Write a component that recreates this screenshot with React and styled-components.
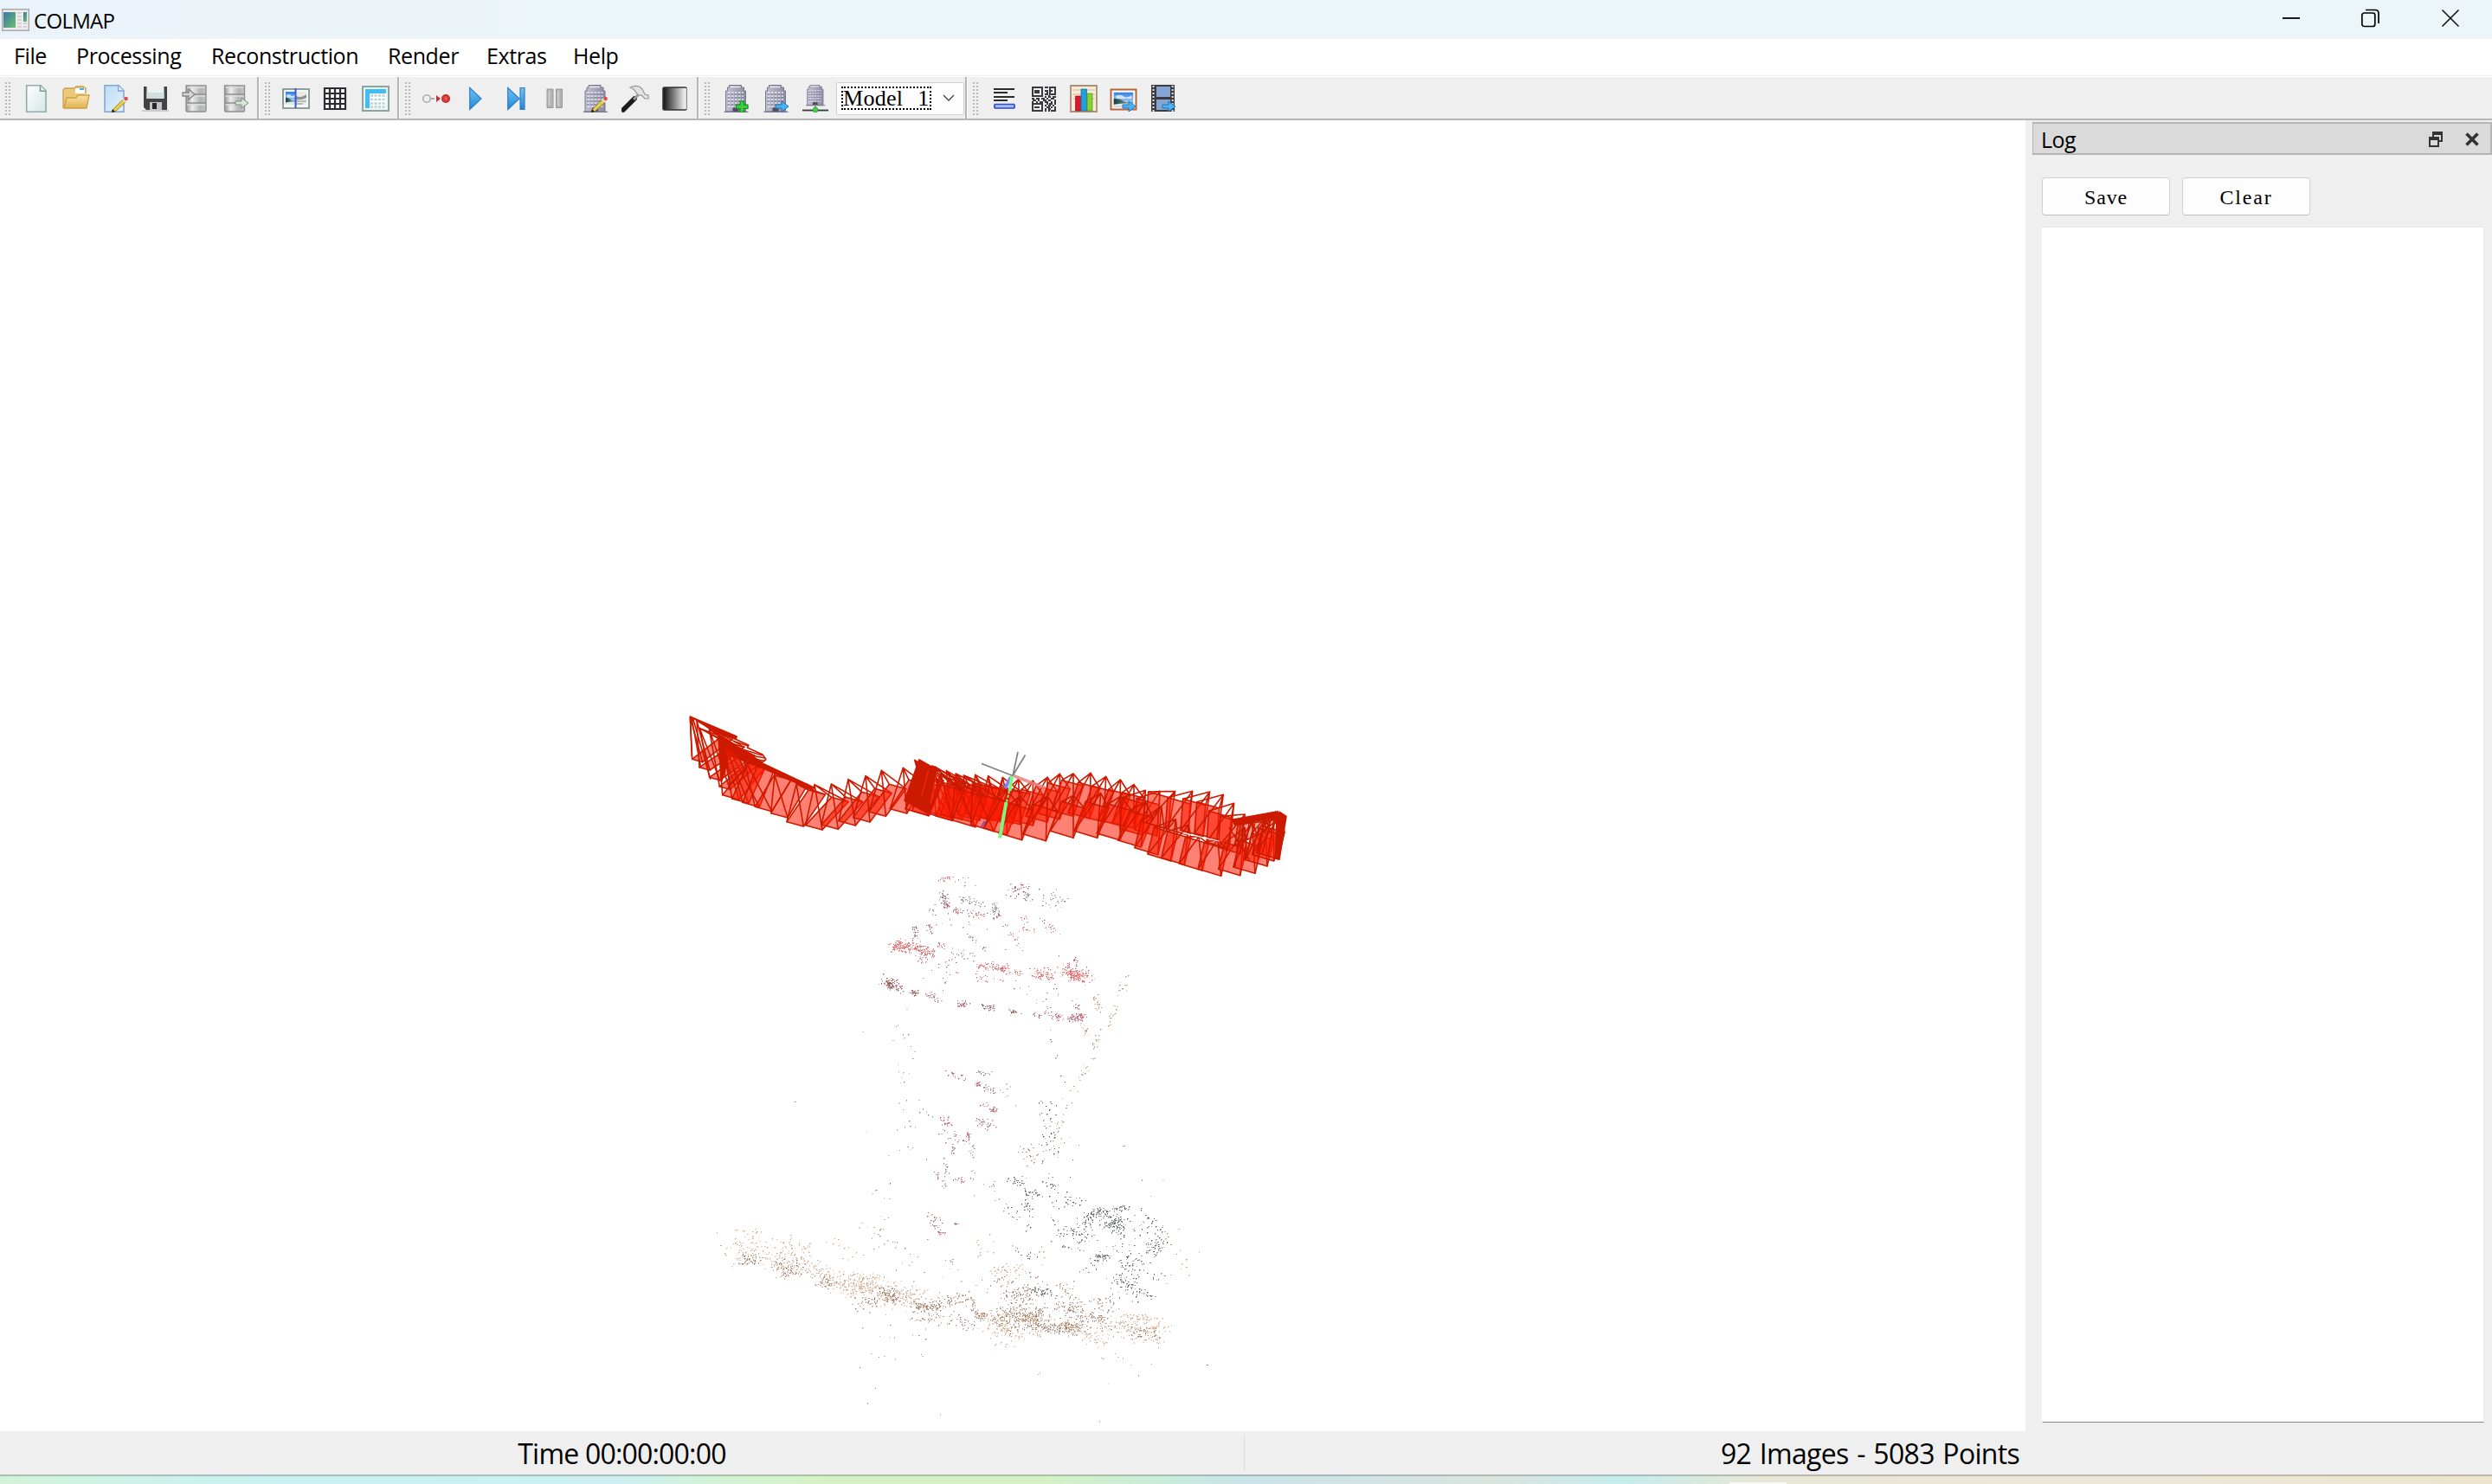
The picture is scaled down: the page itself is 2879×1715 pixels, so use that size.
import React from "react";
import styled, { createGlobalStyle } from "styled-components";

const UI = `"Open Sans", "Noto Sans", sans-serif`;
const MONO = `"Liberation Serif", "Noto Sans CJK SC", serif`;

const Global = createGlobalStyle`
  * { box-sizing: border-box; }
  body { margin: 0; background: #efefef; font-family: ${UI}; color: #000; overflow: hidden; }
  svg { display: block; flex: none; }
`;

const Window = styled.div`
  width: 2879px; height: 1715px; display: flex; flex-direction: column; background: #efefef;
`;
const TitleBar = styled.header`
  height: 45px; flex: none; display: flex; align-items: center; justify-content: space-between;
  padding: 0 36px 0 2px; background: linear-gradient(90deg, #ebf3fa, #ecf5f8 30%);
`;
const Brand = styled.div`
  display: flex; align-items: center; gap: 5px; height: 43px;
`;
const Label = styled.span`
  white-space: pre; display: block;
  font-family: ${(p) => p.$font || UI};
  font-size: ${(p) => p.$size}px;
  line-height: ${(p) => p.$line || 40}px;
  letter-spacing: ${(p) => p.$track || 0}px;
  word-spacing: ${(p) => p.$word || 0}px;
  margin-top: ${(p) => p.$drop || 0}px;
`;
const WindowControls = styled.div`
  display: flex; gap: 68px; margin-top: -3px;
`;
const MenuBar = styled.nav`
  height: 44px; flex: none; display: flex; padding-left: 16px; background: #fff;
  border-bottom: 1px solid #fff; box-shadow: inset 0 -1px 0 #efefef;
`;
const MenuItem = styled.div`
  width: ${(p) => p.$w}px; height: 42px; flex: none;
`;
const ToolBars = styled.div`
  height: 50px; flex: none; display: flex; border-bottom: 2px solid #b5b5b5;
`;
const ToolGroup = styled.div`
  width: ${(p) => (p.$w ? p.$w + "px" : "auto")};
  flex: ${(p) => (p.$w ? "none" : "1")};
  display: flex; align-items: center; gap: 14px; padding: 1px 0 0 6px;
  border-left: ${(p) => (p.$first ? 0 : 1)}px solid #fff;
  border-right: ${(p) => (p.$w ? 2 : 0)}px solid #b5b5b5;
`;
const Handle = styled.div`
  width: 6px; height: 38px; flex: none;
  background-image: radial-gradient(circle at 1px 1px, #b9b9b9 1px, transparent 1.3px);
  background-size: 4px 4px;
`;
const Tool = styled.div`
  width: 32px; height: 32px; flex: none;
`;
const ModelSelect = styled.div`
  width: 148px; height: 38px; margin-left: -6px; flex: none; display: flex; align-items: center; justify-content: space-between;
  padding: 0 10px 0 5px; background: #fdfdfd; border: 1px solid #d0d0d0; border-radius: 2px;
`;
const Focused = styled.div`
  width: 104px; height: 27px; border: 2px dotted #000; display: flex; align-items: center;
`;
const Main = styled.main`
  height: 1515px; flex: none; display: flex;
`;
const Viewport = styled.section`
  width: 2340px; flex: none; background: #fff;
`;
const Dock = styled.aside`
  flex: 1; padding: 2px 0 0 8px; display: flex; flex-direction: column;
`;
const DockTitle = styled.div`
  height: 38px; display: flex; align-items: center; justify-content: space-between; padding: 0 13px 0 9px;
  background: #dadada; border: 2px solid #b5b5b5; border-left-width: 1px;
`;
const DockActions = styled.div`
  display: flex; gap: 26px; align-items: center; padding-top: 2px;
`;
const ButtonRow = styled.div`
  display: flex; gap: 14px; padding: 26px 0 13px 11px;
`;
const Button = styled.button`
  width: 148px; height: 44px; padding: 0; display: flex; align-items: center; justify-content: center;
  background: #fdfdfd; border: 1px solid #d0d0d0; border-bottom-color: #bdbdbd; border-radius: 4px; color: #000;
`;
const LogText = styled.div`
  width: 511px; height: 1382px; margin-left: 11px; background: #fff;
  border: 1px solid #e8e8e8; border-left-color: #fff; border-bottom-color: #868686; border-radius: 2px 2px 0 0;
`;
const StatusBar = styled.footer`
  height: 50px; flex: none; display: flex; padding: 4px 0;
`;
const StatusCell = styled.div`
  flex: 1; height: 42px; display: flex; justify-content: center; align-items: center;
  & + & { border-left: 1px solid #dcdcdc; padding-left: 4px; }
`;
const Desktop = styled.div`
  height: 11px; flex: none; display: flex; align-items: flex-end; padding-left: 1998px;
  background: linear-gradient(rgba(80,80,80,.3) 2px, transparent 2px),
    linear-gradient(90deg, #d2f2d8 0, #cff2e6 4%, #caf0f2 12%, #cdeff1 25%, #d2f2d4 29%, #d4f1c6 33%, #d4f1c6 42%,
    #c8ebdc 47%, #c9e3e8 50%, #d9e4de 60%, #c6ecec 65%, #e8e6d4 71%, #ece8d8 86%, #ece4cc 100%);
`;
const TaskTab = styled.div`
  width: 66px; height: 2px; background: #f8f9f5;
`;
const HiddenDefs = styled.svg`
  position: absolute; width: 0; height: 0;
`;

/* ---------- toolbar icons ---------- */
const Defs = () => (
  <HiddenDefs>
    <defs>
      <linearGradient id="paper" x2="1" y2="1"><stop stopColor="#fff" /><stop offset="1" stopColor="#d3e6e6" /></linearGradient>
      <linearGradient id="blueSheet" x2="1" y2="1"><stop stopColor="#bcdcf5" /><stop offset="1" stopColor="#e4f0fa" /></linearGradient>
      <linearGradient id="folder" x2="0" y2="1"><stop stopColor="#fbe29c" /><stop offset="1" stopColor="#e0b258" /></linearGradient>
      <linearGradient id="steel" x2="1"><stop stopColor="#969696" /><stop offset=".3" stopColor="#eeeef0" /><stop offset=".7" stopColor="#b4b4bc" /><stop offset="1" stopColor="#b8c8ba" /></linearGradient>
      <linearGradient id="sky" x2="0" y2="1"><stop stopColor="#76c3f4" /><stop offset="1" stopColor="#1f86d6" /></linearGradient>
      <linearGradient id="ramp"><stop stopColor="#111" /><stop offset="1" stopColor="#fff" /></linearGradient>
      <linearGradient id="tower"><stop stopColor="#c2c2d2" /><stop offset="1" stopColor="#8d8da3" /></linearGradient>
      <linearGradient id="photoSky" x2="0" y2="1"><stop stopColor="#2f7de4" /><stop offset="1" stopColor="#dff0fb" /></linearGradient>
      <linearGradient id="photoLand" x2="1" y2="0"><stop stopColor="#173d3a" /><stop offset="1" stopColor="#8fbab0" /></linearGradient>
      <linearGradient id="app" x2="1" y2="1"><stop stopColor="#3b74a8" /><stop offset="1" stopColor="#6cc06a" /></linearGradient>
      <radialGradient id="ball"><stop stopColor="#f06060" /><stop offset="1" stopColor="#c02020" /></radialGradient>
    </defs>
  </HiddenDefs>
);
const Svg = ({ children }) => <svg width="32" height="32" viewBox="0 0 32 32">{children}</svg>;

const Pencil = () => (
  <g>
    <path d="M12 29L24 17l3 3L15 31l-4 1z" fill="#e9cf45" stroke="#8b7420" strokeWidth=".8" />
    <path d="M11 32l1-4 3 3z" fill="#222" />
    <path d="M23 17l2-2 4 4-2 2z" fill="#ddd" /><circle cx="27.6" cy="16" r="2.3" fill="#e04a50" />
  </g>
);
const Arrow = ({ x = 14, y = 19, c = "#4db2f2", s = "#2273b5" }) => (
  <path transform={`translate(${x} ${y})`} d="M0 4h7V0l8 6-8 6V8H0z" fill={c} stroke={s} strokeWidth="1" />
);
const Building = () => (
  <g>
    <path d="M6 .5h14V3h3v4h2v24H2V7h2V3h2z" fill="url(#tower)" stroke="#77778f" strokeWidth="1" />
    <path d="M7 2.500h12" stroke="#e4e4ee" strokeWidth="1.500" />
    <path d="M4.500 9h18M4.500 13h18M4.500 17h18M4.500 21h18M4.500 25h18" stroke="#e6e6f0" strokeWidth="1.300" strokeDasharray="2.600 1.400" />
    <path d="M4 11h19M4 15h19M4 19h19M4 23h19" stroke="#73738c" strokeWidth=".9" strokeDasharray="2.500 1.500" />
    <path d="M10 26.500h7v4.500h-7z" fill="#4f4a5c" /><path d="M0 31.300h28" stroke="#77778f" strokeWidth="1.300" />
  </g>
);
const Cylinders = () => (
  <g fill="url(#steel)" stroke="#8e8e8e" strokeWidth="1.300">
    <path d="M5 .8h23v9l-1 1H6l-1-1zM5 11h23v9l-1 1H6l-1-1zM5 21h23v9l-1 1H6l-1-1z" />
    <path d="M6 3h21M6 13h21M6 23h21" stroke="#ddd" />
  </g>
);
const Photo = ({ x, y, w, h }) => (
  <svg x={x} y={y} width={w} height={h} viewBox="0 0 24 18" preserveAspectRatio="none">
    <path d="M0 0h24v18H0z" fill="url(#photoSky)" />
    <path d="M2 5q6-3 10 0t10-1v4H4z" fill="#fff" opacity=".7" />
    <path d="M0 8q8 0 12 3t12 0v7H0z" fill="url(#photoLand)" />
    <path d="M0 15q12-2 24-1v4H0z" fill="#dcebe9" />
  </svg>
);

const NewIcon = () => <Svg><path d="M4.700.7H21l6 6v24.600H4.700z" fill="url(#paper)" stroke="#93abab" strokeWidth="1.600" /><path d="M20.500.8V7.200H27" fill="#e6efef" stroke="#7f9898" strokeWidth="1.500" /></Svg>;
const OpenIcon = () => <Svg><path d="M1 27V6l2-2h11l2-2h8l3 2v6" fill="#edc97c" stroke="#cda047" strokeWidth="1.300" /><path d="M15 4h11v6H15z" fill="#fff" /><path d="M20 4h5v2h-5z" fill="#39b4f0" /><path d="M2 27L5 15h11l2-3h13l-3 15z" fill="url(#folder)" stroke="#cda047" strokeWidth="1.300" /></Svg>;
const EditIcon = () => <Svg><g transform="translate(-1 0)"><path d="M4 .7h16l6 6v24.600H4z" fill="url(#blueSheet)" stroke="#7fa3d2" strokeWidth="1.500" /><path d="M19.500 1v6H26" fill="#e3eefb" stroke="#7fa3d2" strokeWidth="1.300" /></g><Pencil /></Svg>;
const SaveIcon = () => <Svg><path d="M0 30h31" stroke="#ccc" strokeWidth="2" /><path d="M2 2h27v27H5l-3-3z" fill="#434345" /><path d="M5.500 2h20v14h-20z" fill="#e9f1f1" /><path d="M5.500 9h20v7h-20z" fill="#d0dede" /><path d="M9 20h14v9H9z" fill="#bfc4c6" /><path d="M12 21h5v7h-5z" fill="#23252a" /></Svg>;
const ImportIcon = () => <Svg><Cylinders /><path d="M1 9h7V5l7 6-7 6v-4H1z" fill="#d8d8d8" stroke="#858585" strokeWidth="1.300" /></Svg>;
const ExportIcon = () => <Svg><g transform="translate(-1.500 0)"><Cylinders /></g><Arrow x={16} y={15} c="#d5e6d5" s="#7b8b7b" /></Svg>;
const MatchIcon = () => <Svg><path d="M1 5h30v22H1z" fill="#f4f8f8" stroke="#8b9f9f" strokeWidth="2" /><Photo x="4" y="8" w="12" h="15" /><path d="M16 8h12v15H16z" fill="#e8eaea" /><path d="M16 13q6 3 12-2v4q-6 3-12 2z" fill="#666" opacity=".7" /><path d="M16 19h12M16 22h8" stroke="#aaa" strokeWidth="1.500" /><path d="M15.500 4v23" stroke="#3a57d0" strokeWidth="2" /></Svg>;
const GridIcon = () => <Svg><path d="M2 3h26v26H2z" fill="#f7f7f7" /><path d="M3 3v26M9 3v26M15 3v26M21 3v26M27 3v26M2 4h26M2 10h26M2 16h26M2 22h26M2 28h26" stroke="#2c2c2e" strokeWidth="2.200" /></Svg>;
const TableIcon = () => <Svg><path d="M1 2h30v28H1z" fill="#e9f5f3" stroke="#8ba4a2" strokeWidth="2" /><path d="M4 5h24v5H9v17H4z" fill="#41bdf3" /><path d="M9 10h19v17H9z" fill="#fff" /><path d="M10 12.500h17M10 17h17M10 21.500h17M10 25.500h17" stroke="#b9d3d6" strokeWidth="2.600" strokeDasharray="3.200 1.300" /></Svg>;
const LinkIcon = () => <Svg><circle cx="5" cy="16" r="4.200" fill="#efefef" stroke="#aaa" strokeWidth="1.600" /><path d="M9 16h5" stroke="#aaa" strokeWidth="2" /><path d="M16 12l5 4-5 4z" fill="#b33" /><circle cx="27" cy="16" r="5" fill="url(#ball)" /></Svg>;
const PlayIcon = () => <Svg><path d="M8.700 3.500L22 16 8.700 28.500z" fill="url(#sky)" stroke="#2e80c5" strokeWidth="1.200" /></Svg>;
const StepIcon = () => <Svg><path d="M6.700 3.500L20 16 6.700 28.500zM21 3.500h5v25h-5z" fill="url(#sky)" stroke="#2e80c5" strokeWidth="1.200" /></Svg>;
const PauseIcon = () => <Svg><path d="M6 5h7v21.500H6zM16.500 5h7v21.500h-7z" fill="#b4b4b4" stroke="#989898" /><path d="M8.500 7v17M19 7v17" stroke="#d3d3d3" strokeWidth="1.500" /></Svg>;
const BuildEditIcon = () => <Svg><g transform="translate(2 0)"><Building /></g><Pencil /></Svg>;
const HammerIcon = () => <Svg><path d="M2 29L15 16" stroke="#1c1c1c" strokeWidth="5.500" strokeLinecap="round" /><path d="M14 17l7-7" stroke="#999" strokeWidth="3" /><path d="M10 3q9-4 14 2l3 6 4 1v4h-4l-4-4q-4 1-6-3-2-4-7-6z" fill="#e3e3e3" stroke="#969696" strokeWidth="1.200" /></Svg>;
const RampIcon = () => <Svg><rect x="2" y="3" width="27" height="26" rx="1.500" fill="url(#ramp)" stroke="#333" strokeWidth="1.600" /><path d="M28.500 4v24" stroke="#ddd" strokeWidth="1.700" /></Svg>;
const AddModelIcon = () => <Svg><g transform="translate(2.500 0)"><Building /></g><path d="M21 19h4.500v4H30v4.500h-4.500V32H21v-4.500h-4.500V23H21z" fill="#36d13b" stroke="#188a22" strokeWidth="1.200" /></Svg>;
const NextModelIcon = () => <Svg><g transform="translate(2.500 0)"><Building /></g><Arrow x={16} y={19} /></Svg>;
const NetModelIcon = () => <Svg><g transform="translate(5 0) scale(.8 .76)"><Building /></g><path d="M1 29.500h30" stroke="#363b3b" strokeWidth="1.800" /><path d="M16 23v4" stroke="#999" strokeWidth="2" /><circle cx="16" cy="29" r="3" fill="#42d34b" stroke="#219030" strokeWidth=".6" /></Svg>;
const StatsIcon = () => <Svg><path d="M4 5h24M4 9h16M4 14h24M4 18h16" stroke="#2b2b2b" strokeWidth="1.900" /><rect x="5" y="22.500" width="23" height="4.500" rx="1" fill="#a9bdf5" stroke="#2f49c4" strokeWidth="1.700" /></Svg>;
const qrRows = ["111111101101111", "100000100001001", "101110101101101", "101110100101001", "100000101101111", "111111100010000", "000000001011011", "110110110100110", "011010011011001", "100101101100101", "111111100101101", "100000101011010", "101110100110101", "100000101011001", "111111101010111"];
const QrIcon = () => <Svg><g fill="#3a3a3c" shapeRendering="crispEdges">{qrRows.map((r, y) => [...r].map((c, x) => c === "1" && <rect key={x + "-" + y} x={1.500 + x * 1.900} y={2 + y * 1.900} width="2" height="2" />))}</g></Svg>;
const ChartIcon = () => <Svg><path d="M1 1h30v30H1z" fill="#f7ead6" stroke="#a78f7a" strokeWidth="1.800" /><path d="M3 6h26M3 11h26M3 16h26" stroke="#cfbba5" /><path d="M6.500 13h6v17h-6z" fill="#dc1630" stroke="#9a0c1e" strokeWidth=".7" /><path d="M13 5h6.500v25H13z" fill="#22a0dc" stroke="#10699d" strokeWidth=".7" /><path d="M20 10h6v20h-6z" fill="#86d330" stroke="#4c8f17" strokeWidth=".7" /></Svg>;
const PictureIcon = () => <Svg><path d="M1.500 5.500h29v23h-29z" fill="#fff" stroke="#b5653a" strokeWidth="2" /><Photo x="4.500" y="8.500" w="23" h="17" /><Arrow x={15} y={19} /></Svg>;
const FilmIcon = () => <Svg><path d="M2 0h27v31H2z" fill="#3c3c40" /><path d="M8 2h16v12H8zM8 17h16v12H8z" fill="#86a4d4" /><path d="M4.500 1v30M26.700 1v30" stroke="#e4e4e4" strokeWidth="2" strokeDasharray="2 2" /><Arrow x={15} y={19} /></Svg>;

const groups = [
  { w: 299, first: true, icons: [NewIcon, OpenIcon, EditIcon, SaveIcon, ImportIcon, ExportIcon] },
  { w: 162, icons: [MatchIcon, GridIcon, TableIcon] },
  { w: 346, icons: [LinkIcon, PlayIcon, StepIcon, PauseIcon, BuildEditIcon, HammerIcon, RampIcon] },
  { w: 310, icons: [AddModelIcon, NextModelIcon, NetModelIcon], select: true },
  { icons: [StatsIcon, QrIcon, ChartIcon, PictureIcon, FilmIcon] },
];

const menus = [["File", 72], ["Processing", 156], ["Reconstruction", 204], ["Render", 114], ["Extras", 100], ["Help", 80]];

/* ---------- camera frustums ---------- */
const LINE = "#cc1a00";
const Camera = ({ apex, br, w, up }) => {
  const add = (a, b) => [a[0] + b[0], a[1] + b[1]];
  const bl = add(br, w);
  const tr = add(br, up);
  const tl = add(bl, up);
  const q = [bl, br, tr, tl];
  return (
    <g>
      <polygon points={q.join(" ")} fill="rgba(255,26,0,.55)" />
      <path d={q.map((c) => `M${apex}L${c}`).join("")} />
    </g>
  );
};

/* left arm of the trajectory: apex x, apex y, lower right corner x, y, up x, up y */
const leftArm = [
  [52, 55, 95, 212, 110, -85], [75, 68, 120, 240, 120, -80], [85, 95, 155, 275, 120, -85], [118, 98, 190, 307, 110, -95],
  [150, 122, 222, 342, 90, -110], [165, 140, 255, 355, 60, -130], [180, 155, 292, 368, 50, -125],
  [235, 190, 335, 383, 70, -115], [345, 258, 390, 405, 70, -115], [420, 288, 445, 435, 75, -110],
  [483, 290, 510, 447, 90, -97], [541, 288, 565, 445, 85, -95], [600, 272, 625, 432, 80, -100], [660, 260, 675, 420, 75, -100],
  [715, 241, 730, 400, 70, -95], [790, 232, 803, 390, 65, -100], [845, 205, 880, 397, 50, -120], [890, 225, 962, 415, 45, -130],
];
/* middle and right arm */
const backRow = [
  [-310, 25, -185, 225], [-240, 48, -145, 232], [-200, 62, -110, 240], [-168, 72, -85, 235], [-140, 78, -60, 230], [-100, 76, -40, 235], [-55, 80, -10, 240], [-5, 85, 30, 245],
  [50, 92, 55, 248], [100, 97, 100, 252], [150, 85, 150, 240], [193, 73, 193, 230], [240, 72, 240, 220], [300, 70, 297, 228], [353, 82, 345, 240],
  [403, 93, 402, 252], [450, 110, 450, 262], [490, 130, 480, 285], [540, 133, 530, 288], [593, 133, 570, 265], [653, 133, 637, 285],
  [713, 135, 690, 290], [760, 145, 738, 300], [797, 175, 780, 332], [835, 213, 820, 350],
];
const frontRow = [
  [-270, 60, -262, 218], [-220, 70, -180, 235], [-170, 95, -100, 257], [-110, 105, -35, 272], [10, 125, 10, 285], [55, 150, 62, 302],
  [150, 150, 145, 305], [240, 148, 240, 295], [335, 140, 323, 295], [405, 150, 402, 303], [490, 170, 475, 327], [545, 185, 533, 353],
  [595, 230, 578, 375], [640, 250, 625, 388], [675, 290, 687, 408], [740, 300, 752, 427], [835, 260, 818, 425], [860, 240, 870, 418], [905, 225, 912, 393],
  [935, 215, 935, 375], [960, 210, 950, 368],
];
const seeded = (seed) => () => {
  seed = (seed * 1664525 + 1013904223) >>> 0;
  return seed / 4294967296;
};
const Trajectory = () => (
  <g stroke={LINE} strokeWidth="4.800" fill="none" strokeLinejoin="round" strokeLinecap="round">
    <g transform="translate(780 810) scale(.33333)">
      {leftArm.map(([ax, ay, x, y, ux, uy], i) => <Camera key={i} apex={[ax, ay]} br={[x, y]} w={i < 4 ? [-36, -10] : [-58, -16]} up={[ux, uy]} />)}
      <path d="M52 55L213 123 208 132 255 154 250 162 303 186 315 203 300 214M52 55l6 138M57 60l32 172M62 62l60 208M85 95l72 27M75 68L205 128" />
      <path d="M120 85L213 125 210 133 150 112zM150 118L200 150 300 215 480 300 470 306 300 232 190 190 160 280z" fill={LINE} />
      <path d="M205 140l48 16M205 160l95 28M210 178l100 20M215 192l95 16M240 205l60 10" />
      <path d="M170 150L190 290 240 240 220 195z" fill="#e81a00" fillOpacity=".7" />
    </g>
    <g transform="translate(1160 870) scale(.33333)">
      {backRow.map(([ax, ay, x, y], i) => <Camera key={i} apex={[ax, ay]} br={[x, y]} w={i > 16 ? [-78, -22] : [-75, -20]} up={i > 16 ? [8, -108] : [35, -105]} />)}
      {frontRow.map(([ax, ay, x, y], i) => <Camera key={i} apex={[ax, ay]} br={[x, y]} w={i > 15 ? [-75, -22] : [-80, -24]} up={i > 10 ? [22, -92] : [40, -102]} />)}
      <path d="M-294 24L-262 42-235 60-262 212-345 165z" fill={LINE} />
      <path d="M-262 60l-24 90M-235 75l-20 100" stroke="#ff2a10" strokeWidth="3" />
      <path d="M955 205L978 220 954 370 940 366 945 225z" fill={LINE} />
      <path d="M790 232L948 203 955 222 800 250z" fill={LINE} />
      <path d="M810 250l140-20-60 50-90 40zM900 240l-20 130M925 230l-30 120M850 240l-20 130M870 240l-35 130M780 260l70 110M790 250l-20 90M820 245l-20 150M935 235l-20 120" fill={LINE} fillOpacity=".4" />
      <path d="M620 278L745 306" stroke="#fff" strokeWidth="3.500" />
    </g>
  </g>
);
const Axes = () => (
  <g fill="none">
    <path d="M1171 896.500L1208 911" stroke="#ee7f80" strokeWidth="3.500" opacity=".85" />
    <path d="M1168 898l-7 13" stroke="#8080ff" strokeWidth="4" />
    <path d="M1169 897L1166.500 914" stroke="#80f580" strokeWidth="4" />
    <path d="M1166 914L1162.500 929" stroke="#80f580" strokeWidth="2" strokeDasharray="3 2" />
    <path d="M1162.500 927L1155 968.500" stroke="#80f580" strokeWidth="4" />
    <path d="M1138 949l-4 7" stroke="#8a3a90" strokeWidth="3" opacity=".7" />
    <path d="M1170 896.500L1134 882.500M1170 896.500L1176 869M1170 896.500L1184.500 872.500" stroke="#808080" strokeWidth="1.700" />
  </g>
);

/* ---------- sparse point cloud ---------- */
const C = { red: "#d01c1c", crim: "#9c2230", dark: "#6a1416", mauve: "#7c4450", grey: "#606068", black: "#161a1c", tan: "#bd8458", brown: "#7c452a", orange: "#a0682c" };
/* rows: x1, y1, x2, y2, spread, count, colour */
const upperCloud = [
  [318, 74, 358, 72, 8, 20, "red"], [375, 85, 430, 85, 12, 8, "grey"], [325, 132, 335, 155, 9, 40, "mauve"], [328, 165, 345, 165, 8, 22, "crim"], [285, 170, 290, 190, 10, 9, "mauve"],
  [385, 145, 470, 162, 7, 38, "grey"], [365, 182, 395, 188, 6, 24, "crim"], [415, 195, 525, 203, 8, 38, "crim"], [500, 165, 515, 190, 8, 28, "grey"],
  [560, 120, 605, 110, 14, 34, "crim"], [615, 125, 625, 155, 9, 22, "grey"], [670, 140, 750, 160, 18, 30, "mauve"], [605, 210, 615, 260, 8, 14, "red"], [670, 215, 720, 260, 12, 18, "crim"],
  [545, 250, 590, 295, 8, 12, "crim"], [155, 308, 245, 310, 13, 140, "red"], [228, 240, 232, 285, 6, 18, "dark"], [275, 235, 285, 255, 6, 14, "dark"],
  [240, 325, 290, 335, 12, 55, "red"], [250, 350, 250, 365, 8, 8, "crim"], [310, 300, 340, 310, 8, 14, "red"], [370, 335, 425, 340, 12, 22, "grey"], [415, 275, 435, 295, 8, 12, "grey"], [455, 310, 475, 320, 6, 8, "mauve"],
  [450, 375, 555, 390, 10, 85, "red"], [440, 415, 550, 422, 8, 15, "red"], [575, 395, 610, 415, 8, 14, "red"], [640, 400, 705, 410, 15, 65, "red"],
  [740, 390, 825, 415, 20, 105, "red"], [770, 408, 802, 415, 11, 60, "red"], [780, 350, 790, 370, 6, 8, "crim"],
  [120, 425, 180, 455, 12, 75, "dark"], [138, 438, 145, 445, 8, 50, "dark"], [218, 466, 240, 470, 6, 26, "dark"], [270, 470, 315, 498, 10, 26, "mauve"],
  [378, 503, 408, 512, 8, 26, "crim"], [468, 516, 500, 524, 7, 26, "dark"], [562, 533, 582, 540, 8, 20, "dark"], [640, 548, 668, 548, 7, 14, "crim"], [708, 555, 735, 558, 8, 28, "crim"],
  [765, 562, 820, 548, 8, 75, "crim"], [780, 500, 795, 530, 12, 10, "crim"], [965, 415, 900, 580, 9, 28, "orange"], [880, 600, 800, 780, 9, 30, "orange"], [850, 480, 870, 530, 9, 20, "orange"], [800, 570, 830, 615, 10, 16, "orange"],
  [650, 490, 690, 540, 12, 12, "mauve"], [340, 740, 400, 772, 7, 14, "crim"], [440, 745, 500, 755, 6, 16, "mauve"], [445, 782, 450, 790, 5, 18, "crim"], [470, 800, 520, 815, 9, 22, "mauve"], [450, 860, 480, 862, 6, 8, "crim"], [490, 878, 515, 875, 5, 24, "crim"],
  [440, 910, 500, 932, 10, 34, "crim"], [415, 955, 410, 985, 8, 26, "crim"], [315, 905, 350, 925, 10, 22, "crim"], [325, 960, 385, 975, 11, 20, "mauve"],
  [165, 565, 220, 700, 28, 9, "grey"], [170, 700, 210, 1000, 26, 17, "grey"], [700, 840, 690, 1000, 20, 34, "black"], [780, 800, 720, 980, 12, 22, "orange"], [690, 600, 740, 770, 14, 7, "black"],
  [620, 1000, 800, 1000, 25, 10, "grey"], [540, 800, 600, 890, 12, 7, "grey"], [240, 860, 270, 900, 16, 6, "grey"], [300, 380, 430, 380, 22, 14, "crim"], [480, 250, 700, 320, 40, 12, "mauve"],
  [300, 210, 450, 250, 30, 8, "mauve"], [560, 450, 740, 470, 25, 12, "mauve"], [250, 400, 350, 440, 30, 8, "mauve"], [800, 380, 830, 450, 10, 8, "red"],
];
const lowerCloud = [
  [70, 300, 140, 320, 14, 16, "tan"], [80, 370, 150, 395, 30, 75, "tan"], [105, 405, 130, 408, 14, 40, "brown"], [180, 380, 300, 380, 34, 105, "tan"], [200, 430, 265, 445, 18, 60, "brown"], [190, 425, 290, 430, 26, 60, "tan"],
  [310, 450, 400, 480, 22, 80, "tan"], [340, 480, 360, 488, 12, 35, "brown"], [390, 490, 500, 495, 26, 180, "tan"], [440, 470, 500, 470, 16, 30, "tan"], [430, 550, 520, 560, 20, 40, "brown"], [500, 520, 640, 540, 25, 180, "tan"], [528, 520, 560, 540, 15, 70, "brown"],
  [620, 565, 690, 570, 9, 75, "brown"], [690, 545, 765, 545, 15, 60, "brown"], [610, 600, 700, 600, 22, 50, "brown"], [720, 600, 790, 640, 20, 30, "brown"], [785, 520, 800, 590, 8, 25, "brown"],
  [805, 595, 825, 603, 8, 34, "brown"], [840, 605, 900, 630, 20, 110, "tan"], [880, 620, 990, 605, 25, 175, "brown"], [930, 600, 990, 610, 18, 60, "tan"], [980, 635, 1130, 645, 15, 170, "brown"], [1070, 630, 1115, 645, 14, 60, "tan"], [840, 660, 1000, 660, 14, 50, "tan"], [1130, 670, 1200, 690, 14, 35, "tan"], [1140, 600, 1200, 630, 18, 60, "brown"],
  [1200, 640, 1360, 650, 25, 150, "tan"], [1270, 650, 1340, 665, 18, 45, "brown"], [1250, 600, 1340, 610, 8, 35, "tan"], [1340, 690, 1370, 690, 10, 12, "tan"], [840, 440, 940, 440, 11, 36, "tan"], [840, 490, 1000, 480, 24, 45, "brown"],
  [890, 540, 980, 520, 18, 75, "brown"], [980, 510, 1030, 525, 10, 38, "black"], [1060, 560, 1120, 600, 20, 75, "brown"], [1060, 500, 1110, 545, 16, 30, "brown"], [1150, 560, 1220, 570, 16, 36, "brown"], [860, 575, 1010, 580, 14, 60, "brown"],
  [1135, 280, 1160, 245, 14, 50, "black"], [1175, 240, 1205, 240, 14, 36, "black"], [1190, 270, 1185, 300, 10, 12, "black"], [1225, 225, 1260, 228, 8, 26, "black"], [1215, 268, 1235, 278, 14, 50, "black"], [1210, 295, 1245, 300, 12, 34, "black"], [1080, 290, 1130, 325, 18, 42, "black"],
  [1300, 250, 1360, 350, 26, 45, "black"], [1330, 360, 1355, 365, 16, 36, "black"], [1160, 408, 1205, 390, 11, 40, "black"], [1200, 360, 1290, 380, 22, 20, "black"], [1240, 420, 1300, 420, 22, 40, "black"], [1225, 480, 1280, 480, 20, 50, "black"], [1220, 530, 1350, 515, 18, 32, "black"], [1130, 430, 1160, 430, 14, 7, "black"], [1340, 460, 1380, 480, 15, 9, "black"], [1370, 300, 1380, 360, 10, 8, "brown"],
  [940, 120, 962, 240, 11, 32, "black"], [900, 130, 925, 140, 11, 14, "black"], [960, 172, 995, 175, 8, 20, "black"], [1010, 130, 1050, 160, 14, 18, "black"], [900, 240, 985, 290, 20, 16, "black"], [935, 10, 1020, 90, 18, 26, "brown"], [1030, 20, 1090, 50, 12, 8, "black"], [1050, 210, 1125, 200, 14, 22, "black"], [1040, 260, 1070, 370, 12, 16, "black"],
  [735, 5, 730, 40, 6, 12, "mauve"], [684, 100, 684, 125, 4, 8, "crim"], [705, 50, 712, 160, 8, 20, "mauve"], [740, 130, 765, 130, 8, 14, "crim"], [790, 10, 795, 180, 8, 18, "grey"], [660, 240, 690, 310, 10, 18, "crim"], [690, 313, 710, 313, 5, 12, "crim"], [742, 280, 742, 282, 4, 9, "crim"], [680, 250, 690, 290, 8, 10, "brown"],
  [800, 340, 820, 400, 8, 10, "tan"], [490, 100, 520, 400, 26, 17, "grey"], [560, 300, 620, 460, 26, 12, "grey"], [840, 130, 900, 220, 16, 12, "orange"], [930, 370, 970, 400, 12, 12, "black"], [1000, 380, 1200, 340, 18, 12, "brown"], [1400, 300, 1450, 470, 22, 7, "orange"], [690, 380, 790, 500, 30, 12, "grey"], [440, 280, 540, 330, 16, 9, "orange"], [350, 340, 440, 400, 20, 12, "tan"], [440, 640, 660, 680, 20, 9, "brown"],
  [860, 690, 920, 710, 12, 7, "tan"], [1140, 740, 1250, 740, 14, 6, "tan"], [640, 741, 644, 742, 4, 3, "grey"], [480, 730, 560, 755, 5, 4, "grey"], [1230, 775, 1345, 770, 4, 2, "tan"], [950, 788, 1018, 808, 3, 2, "tan"], [820, 350, 1000, 440, 35, 12, "tan"],
];
const outliers = [
  [20, 312, "tan"], [32, 356, "black"], [453, 779, "black"], [499, 851, "brown"], [475, 903, "black"], [695, 942, "tan"], [1177, 966, "orange"], [1500, 772, "black"], [1202, 836, "tan"], [1293, 806, "grey"],
  [1477, 379, "orange"], [1304, 130, "black"], [1367, 133, "orange"], [1249, 13, "black"], [1331, 185, "black"], [544, 140, "black"], [538, 44, "orange"], [572, 27, "orange"], [597, 16, "black"], [612, 18, "grey"], [652, 57, "grey"], [1408, 386, "mauve"], [1088, 119, "black"],
];
const pointPaths = () => {
  const rnd = seeded(92);
  const solid = {};
  const faint = {};
  const put = (x, y, c) => {
    x = Math.round(x);
    y = Math.round(y);
    if (rnd() < 0.5) solid[c] = (solid[c] || "") + `M${x} ${y}h1v1h-1z`;
    faint[c] = (faint[c] || "") + (rnd() < 0.5 ? `M${x} ${y}h2v1h-2z` : `M${x} ${y}h1v1h-1z`) + (rnd() < 0.5 ? `M${x} ${y + 1}h1v1h-1z` : "");
  };
  const spray = (rows, ox, oy, sx, sy) => rows.forEach(([x1, y1, x2, y2, sp, n, c]) => {
    for (let i = 0; i < n; i++) {
      const t = rnd();
      const g = () => (rnd() + rnd() + rnd() - 1.5) * 1.6 * sp;
      put(ox + (x1 + (x2 - x1) * t + g()) * sx, oy + (y1 + (y2 - y1) * t + g()) * sy, c);
    }
  });
  spray(upperCloud, 980, 990, 1 / 3, 1 / 3);
  spray(lowerCloud, 820, 1320, 1 / 2.613, 1 / 3);
  outliers.forEach(([x, y, c]) => put(820 + x / 2.613, 1320 + y / 3, c));
  [[918, 1273, "grey"], [996, 1192, "orange"], [1001, 1307, "grey"], [1297, 1324, "black"]].forEach((p) => put(...p));
  return { solid, faint };
};
const points = pointPaths();
const PointCloud = () => (
  <g shapeRendering="crispEdges">
    {Object.keys(points.faint).map((k) => <path key={k} d={points.faint[k]} fill={C[k]} opacity=".38" />)}
    {Object.keys(points.solid).map((k) => <path key={k} d={points.solid[k]} fill={C[k]} opacity=".5" />)}
  </g>
);

export default function App() {
  return (
    <Window>
      <Global />
      <Defs />
      <TitleBar>
        <Brand>
          <svg width="32" height="26" viewBox="0 0 32 26">
            <path d="M.7.7h30.600v24.600H.7z" fill="#ececec" stroke="#a9a9ab" strokeWidth="1.400" />
            <path d="M2 4h14v18H2z" fill="url(#app)" />
            <path d="M18 5h5M18 9h5M18 13h5M18 17h5M18 21h5M25 17h4M25 21h4" stroke="#c9c9c9" strokeWidth="1.300" />
            <path d="M25 4h4v11h-4z" fill="url(#app)" />
          </svg>
          <Label $size={24} $track={-0.7} $drop={3}>COLMAP</Label>
        </Brand>
        <WindowControls>
          <svg width="24" height="24" viewBox="0 0 24 24"><path d="M2 12h20" stroke="#000" strokeWidth="1.800" /></svg>
          <svg width="24" height="24" viewBox="0 0 24 24" fill="none" stroke="#000" strokeWidth="1.700"><rect x="1.800" y="6" width="15" height="15.500" rx="2.500" /><path d="M6 2.500h11q4 0 4 4v11.500" /></svg>
          <svg width="24" height="24" viewBox="0 0 24 24"><path d="M2.500 2.500l19 19M21.500 2.500l-19 19" stroke="#111" strokeWidth="1.600" /></svg>
        </WindowControls>
      </TitleBar>
      <MenuBar>
        {menus.map(([t, w]) => <MenuItem key={t} $w={w}><Label $size={25} $track={-0.4} $line={38}>{t}</Label></MenuItem>)}
      </MenuBar>
      <ToolBars>
        {groups.map((g, i) => (
          <ToolGroup key={i} $w={g.w} $first={g.first}>
            <Handle />
            {g.icons.map((I, k) => <Tool key={k}><I /></Tool>)}
            {g.select && (
              <ModelSelect>
                <Focused><Label $font={MONO} $size={26} $track={0.3} $word={10} $line={24}>Model 1</Label></Focused>
                <svg width="14" height="9" viewBox="0 0 14 9"><path d="M1 1l6 6 6-6" stroke="#444" strokeWidth="1.400" fill="none" /></svg>
              </ModelSelect>
            )}
          </ToolGroup>
        ))}
      </ToolBars>
      <Main>
        <Viewport>
          <svg width="2340" height="1515" viewBox="0 139 2340 1515">
            <PointCloud />
            <Trajectory />
            <Axes />
          </svg>
        </Viewport>
        <Dock>
          <DockTitle>
            <Label $size={25} $track={-0.5} $line={34} $drop={2}>Log</Label>
            <DockActions>
              <svg width="16" height="18" viewBox="0 0 16 18"><path d="M4 0h12v12h-4v-2h2V4H6v2H4z" fill="#333" /><path d="M0 6h12v12H0zM2 10v6h8v-6z" fill="#333" fillRule="evenodd" /></svg>
              <svg width="16" height="16" viewBox="0 0 16 16"><path d="M1.500 1.500l13 13M14.500 1.500l-13 13" stroke="#333" strokeWidth="3.600" /></svg>
            </DockActions>
          </DockTitle>
          <ButtonRow>
            <Button><Label $font={MONO} $size={24} $track={0.8} $drop={2}>Save</Label></Button>
            <Button><Label $font={MONO} $size={24} $track={1.8} $drop={2}>Clear</Label></Button>
          </ButtonRow>
          <LogText />
        </Dock>
      </Main>
      <StatusBar>
        <StatusCell><Label $size={32} $track={-0.8} $drop={1}>Time 00:00:00:00</Label></StatusCell>
        <StatusCell><Label $size={32} $track={-0.7} $word={2} $drop={1}>92 Images - 5083 Points</Label></StatusCell>
      </StatusBar>
      <Desktop><TaskTab /></Desktop>
    </Window>
  );
}
